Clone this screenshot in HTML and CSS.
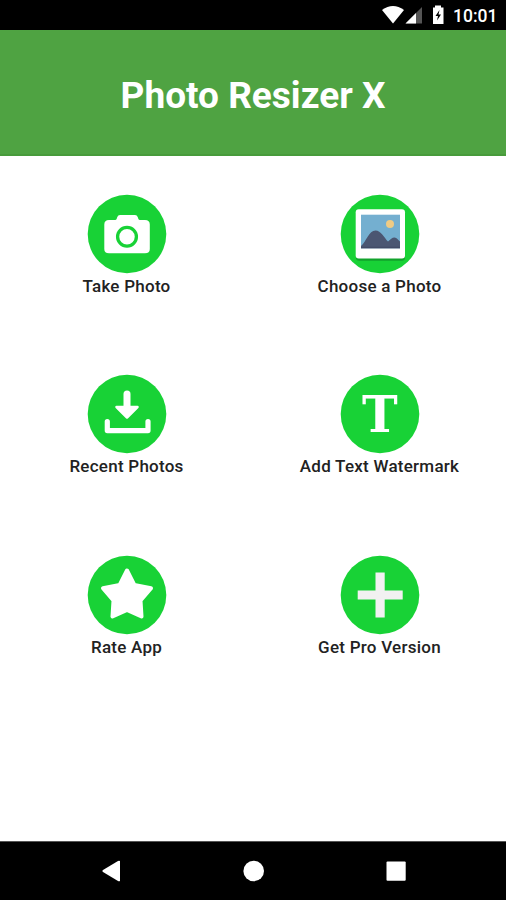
FILE: index.html
```
<!DOCTYPE html>
<html lang="en">
	<head>
		<meta charset="UTF-8" />
		<meta name="viewport" content="width=device-width, initial-scale=1.0" />
		<title>Photo Resizer X</title>
		<link rel="stylesheet" href="styles.css">
	</head>

	<body>
		<div class="status-bar">
			<svg class="status-icons" width="66" height="30" viewBox="0 0 66 30">
				<path d="M1 10 Q12 2 23 10 L12 23.5 Z" fill="#fff" />
				<path d="M41 7 V23.5 H24.5 Z" fill="#555" />
				<path d="M35 13 V23.5 H24.5 Z" fill="#fff" />
				<path d="M52 7.5 H54 V5.5 H60 V7.5 H62.5 V24 H52 Z" fill="#fff" />
				<path d="M58.5 10 L54.500 16 H57 L56 20.500 L60 14.500 H57.500 Z" fill="#000" />
			</svg>
			<span class="clock">10:01</span>
		</div>

		<header class="app-header">
			<h1>Photo Resizer X</h1>
		</header>

		<main class="menu">
			<a class="menu-item">
				<svg class="menu-icon" viewBox="0 0 80 80">
					<circle cx="40" cy="40" r="39.3" fill="#18d236" />
					<path d="M22 26 H28 Q29.3 26 29.8 24.5 L30.3 23 Q31 21 33 21 H48 Q50 21 50.7 23 L51.2 24.5 Q51.7 26 53 26 H58 Q62.800 26 62.800 30.500 V55 Q62.800 59.300 58 59.300 H22 Q17.300 59.300 17.300 55 V30.500 Q17.300 26 22 26 Z" fill="#fff" />
					<circle cx="40" cy="42.700" r="9.400" fill="none" stroke="#18d236" stroke-width="3.300" />
				</svg>
				<span>Take Photo</span>
			</a>
			<a class="menu-item">
				<svg class="menu-icon" viewBox="0 0 80 80">
					<circle cx="40" cy="40" r="39.3" fill="#18d236" />
					<rect x="16" y="18" width="49" height="48.7" rx="3" fill="#12a32c" />
					<rect x="15.7" y="15.3" width="49.3" height="49.2" rx="3" fill="#fff" />
					<rect x="21" y="20.700" width="39" height="33.500" fill="#74afd0" />
					<circle cx="50" cy="30" r="4" fill="#efcb84" />
					<path d="M21 52 C26 48 29 36.500 35.500 36.500 C41 36.500 44 43.500 48 47.500 C50.500 45.500 52 43.500 54.500 43.500 C57 43.500 58 46 60 47.500 V54.200 H21 Z" fill="#4b5672" />
					<path d="M21 52.700 H60 V54.200 H21 Z" fill="#424b67" />
				</svg>
				<span>Choose a Photo</span>
			</a>
			<a class="menu-item">
				<svg class="menu-icon" viewBox="0 0 80 80">
					<circle cx="40" cy="40" r="39.3" fill="#18d236" />
					<path d="M40 20 V34" fill="none" stroke="#fff" stroke-width="7" stroke-linecap="round" />
					<path d="M29.500 33 H50.500 L40 43.500 Z" fill="#fff" stroke="#fff" stroke-width="2.500" stroke-linejoin="round" />
					<path d="M20.300 47.500 V56.600 H61 V47.500" fill="none" stroke="#fff" stroke-width="5.200" stroke-linecap="round" stroke-linejoin="round" />
				</svg>
				<span>Recent Photos</span>
			</a>
			<a class="menu-item">
				<svg class="menu-icon" viewBox="0 0 80 80">
					<circle cx="40" cy="40" r="39.3" fill="#18d236" />
					<text class="letter" x="42.500" y="58.500" text-anchor="middle" transform="scale(0.94 1)">T</text>
				</svg>
				<span>Add Text Watermark</span>
			</a>
			<a class="menu-item">
				<svg class="menu-icon" viewBox="0 0 80 80">
					<circle cx="40" cy="40" r="39.3" fill="#18d236" />
					<path d="M40 15.500 L47.300 30 L64 33.300 L53.500 45.500 L54.500 61.500 L40 55 L25.500 61.500 L26.500 45.500 L16 33.300 L32.700 30 Z" fill="#fff" stroke="#fff" stroke-width="4" stroke-linejoin="round" />
				</svg>
				<span>Rate App</span>
			</a>
			<a class="menu-item">
				<svg class="menu-icon" viewBox="0 0 80 80">
					<circle cx="40" cy="40" r="39.3" fill="#18d236" />
					<path d="M35.500 17.500 H44.700 V35.500 H62.700 V44.500 H44.700 V62.500 H35.500 V44.500 H17.700 V35.500 H35.500 Z" fill="#f1f1f1" />
				</svg>
				<span>Get Pro Version</span>
			</a>
		</main>

		<nav class="nav-bar">
			<svg width="20" height="22" viewBox="0 0 20 22">
				<path d="M19 1 V21 Q18 21.5 17 21 L2 12 Q0.5 11 2 10 L17 1 Q18 0.5 19 1 Z" fill="#fff" />
			</svg>
			<svg width="22" height="22" viewBox="0 0 22 22">
				<circle cx="10.7" cy="11" r="10.3" fill="#fff" />
			</svg>
			<svg width="20" height="22" viewBox="0 0 20 22">
				<rect x="0.5" y="1.500" width="19.200" height="19.200" rx="1" fill="#fff" />
			</svg>
		</nav>
	</body>
</html>
```

FILE: styles.css
```
* {
	box-sizing: border-box;
}
body {
	display: flex;
	flex-direction: column;
	height: 900px;
	margin: 0;
	background-color: white;
	font-family: Roboto, Arial, sans-serif;
}
.status-bar {
	display: flex;
	justify-content: flex-end;
	align-items: center;
	gap: 6px;
	height: 30px;
	padding-right: 10px;
	background-color: black;
	color: white;
}
.clock {
	width: 43px;
	padding-top: 2px;
	font-size: 17.5px;
	font-weight: 500;
	white-space: nowrap;
}
.app-header {
	display: flex;
	justify-content: center;
	align-items: center;
	height: 126px;
	padding-top: 6px;
	background-color: #4fa342;
	border-bottom: 2px solid #489b3b;
}
.app-header h1 {
	margin: 0;
	color: white;
	font-size: 37px;
	font-weight: bold;
}
.menu {
	flex: 1;
	display: grid;
	grid-template-columns: 1fr 1fr;
	grid-auto-rows: 180.4px;
	align-content: start;
	padding-top: 38px;
}
.menu-item {
	display: flex;
	flex-direction: column;
	align-items: center;
	color: #222;
	font-size: 17px;
	font-weight: 500;
	line-height: 24px;
	letter-spacing: 0.25px;
}
.menu-icon {
	width: 80px;
	height: 80px;
}
.letter {
	font-family: "DejaVu Serif", serif;
	font-size: 51px;
	font-weight: bold;
	letter-spacing: 0;
	fill: white;
}
.nav-bar {
	display: flex;
	justify-content: space-between;
	align-items: center;
	height: 59px;
	padding: 0 100px 0 101px;
	background-color: black;
	border-top: 1px solid #555;
}
```
